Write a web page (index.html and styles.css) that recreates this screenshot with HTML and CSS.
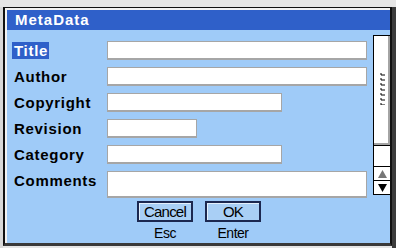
FILE: index.html
```html
<!DOCTYPE html>
<html lang="en">
<head>
  <meta charset="UTF-8" />
  <title>MetaData</title>
  <link rel="stylesheet" href="styles.css">
</head>
<body>

  <div class="dialog">
    <div class="frame">
      <div class="titlebar">MetaData</div>

      <div class="content">
        <div class="main">
          <div class="fields">
            <label class="selected"><span>Title</span></label>
            <input type="text" class="w-long">

            <label>Author</label>
            <input type="text" class="w-long">

            <label>Copyright</label>
            <input type="text" class="w-mid">

            <label>Revision</label>
            <input type="text" class="w-short">

            <label>Category</label>
            <input type="text" class="w-mid">

            <label class="top">Comments</label>
            <textarea class="w-long comments"></textarea>
          </div>

          <div class="scrollbar">
            <div class="thumb">
              <svg class="grip" width="6" height="33" viewBox="0 0 6 33">
                <path d="M1 3h4M1 1v2 M1 8h4M1 6v2 M1 13h4M1 11v2 M1 18h4M1 16v2 M1 23h4M1 21v2 M1 28h4M1 26v2 M1 33h4M1 31v2" stroke="#000" stroke-width="1" fill="none"/>
              </svg>
            </div>
            <div class="track"></div>
            <div class="arrow">
              <svg width="9" height="8" viewBox="0 0 9 8"><path d="M4.5 0L9 8H0z" fill="#777"/></svg>
            </div>
            <div class="arrow">
              <svg width="9" height="8" viewBox="0 0 9 8"><path d="M0 0H9L4.5 8z" fill="#000"/></svg>
            </div>
          </div>
        </div>

        <div class="buttons">
          <div class="action">
            <button>Cancel</button>
            <span class="key">Esc</span>
          </div>
          <div class="action">
            <button>OK</button>
            <span class="key">Enter</span>
          </div>
        </div>
      </div>
    </div>
  </div>

</body>
</html>
```

FILE: styles.css
```css
body {
  margin: 0;
  width: 396px;
  height: 248px;
  overflow: hidden;
  font-family: 'Liberation Sans', Arial, sans-serif;
  background:
    linear-gradient(#e6e6e6, #e6e6e6) top / 100% 7px no-repeat,
    linear-gradient(to right, #d8d8d8 3px, #e6e6e6 3px, #e6e6e6 392px, #3c3c3c 392px);
}

.dialog {
  margin: 7px 4px 0 3px;
  border: 1px solid #111;
  border-width: 1px 2px 3px 2px;
  border-bottom-color: #3a3a3a;
}

.frame {
  border-top: 2px solid #f2f2f2;
  border-left: 2px solid #f2f2f2;
}

.titlebar {
  height: 20px;
  line-height: 20px;
  padding-left: 8px;
  background: #2f60c9;
  color: white;
  font-size: 15px;
  font-weight: bold;
  letter-spacing: 1px;
}

.content {
  height: 213px;
  box-sizing: border-box;
  padding-top: 5px;
  background: #9fcbf8;
}

.main {
  display: flex;
}

.fields {
  flex: 1;
  display: grid;
  grid-template-columns: 93px 1fr;
  row-gap: 7px;
  padding: 6px 0 0 7px;
}

.fields label {
  height: 19px;
  line-height: 19px;
  font-size: 15px;
  font-weight: bold;
  letter-spacing: 0.7px;
  color: #000;
  white-space: nowrap;
}

.fields label.selected span {
  background: #2f60c9;
  color: white;
  margin-left: -2px;
  padding: 0 1px 0 2px;
  line-height: 17px;
  display: inline-block;
}

.fields label.top {
  align-self: start;
}

input, textarea {
  display: block;
  box-sizing: border-box;
  height: 19px;
  margin: 0;
  padding: 0;
  background: #fff;
  border: 1px solid #a6a6a6;
  border-bottom-width: 2px;
  resize: none;
}

.w-long { width: 260px; }
.w-mid { width: 175px; }
.w-short { width: 90px; }

.comments {
  height: 27px;
}

.scrollbar {
  width: 17px;
  height: 160px;
  box-sizing: border-box;
  border: 1px solid #000;
  border-right: none;
  background: #fff;
}

.thumb {
  height: 109px;
  box-sizing: border-box;
  border-right: 2px solid #a4a4a4;
  border-bottom: 2px solid #a4a4a4;
  padding: 36px 0 0 6px;
}

.grip {
  display: block;
}

.track {
  height: 20px;
  border-top: 1px solid #000;
}

.arrow {
  height: 13px;
  border-top: 1px solid #000;
  display: flex;
  align-items: center;
  justify-content: center;
}

.arrow svg {
  display: block;
}

.buttons {
  display: flex;
  justify-content: center;
  gap: 12px;
  margin-top: 3px;
  padding-left: 1px;
}

.action {
  display: flex;
  flex-direction: column;
  align-items: center;
  gap: 3px;
}

button {
  width: 56px;
  height: 21px;
  padding: 0 0 1px;
  font-family: 'Liberation Sans', Arial, sans-serif;
  font-size: 15px;
  letter-spacing: -0.8px;
  line-height: 17px;
  color: #000;
  background: #a9cff5;
  border: 2px solid #1c2850;
  box-shadow: inset 1px 1px 0 #e4f0fc;
}

.key {
  font-size: 14px;
  line-height: 16px;
  letter-spacing: -0.5px;
  color: #000;
}
```
